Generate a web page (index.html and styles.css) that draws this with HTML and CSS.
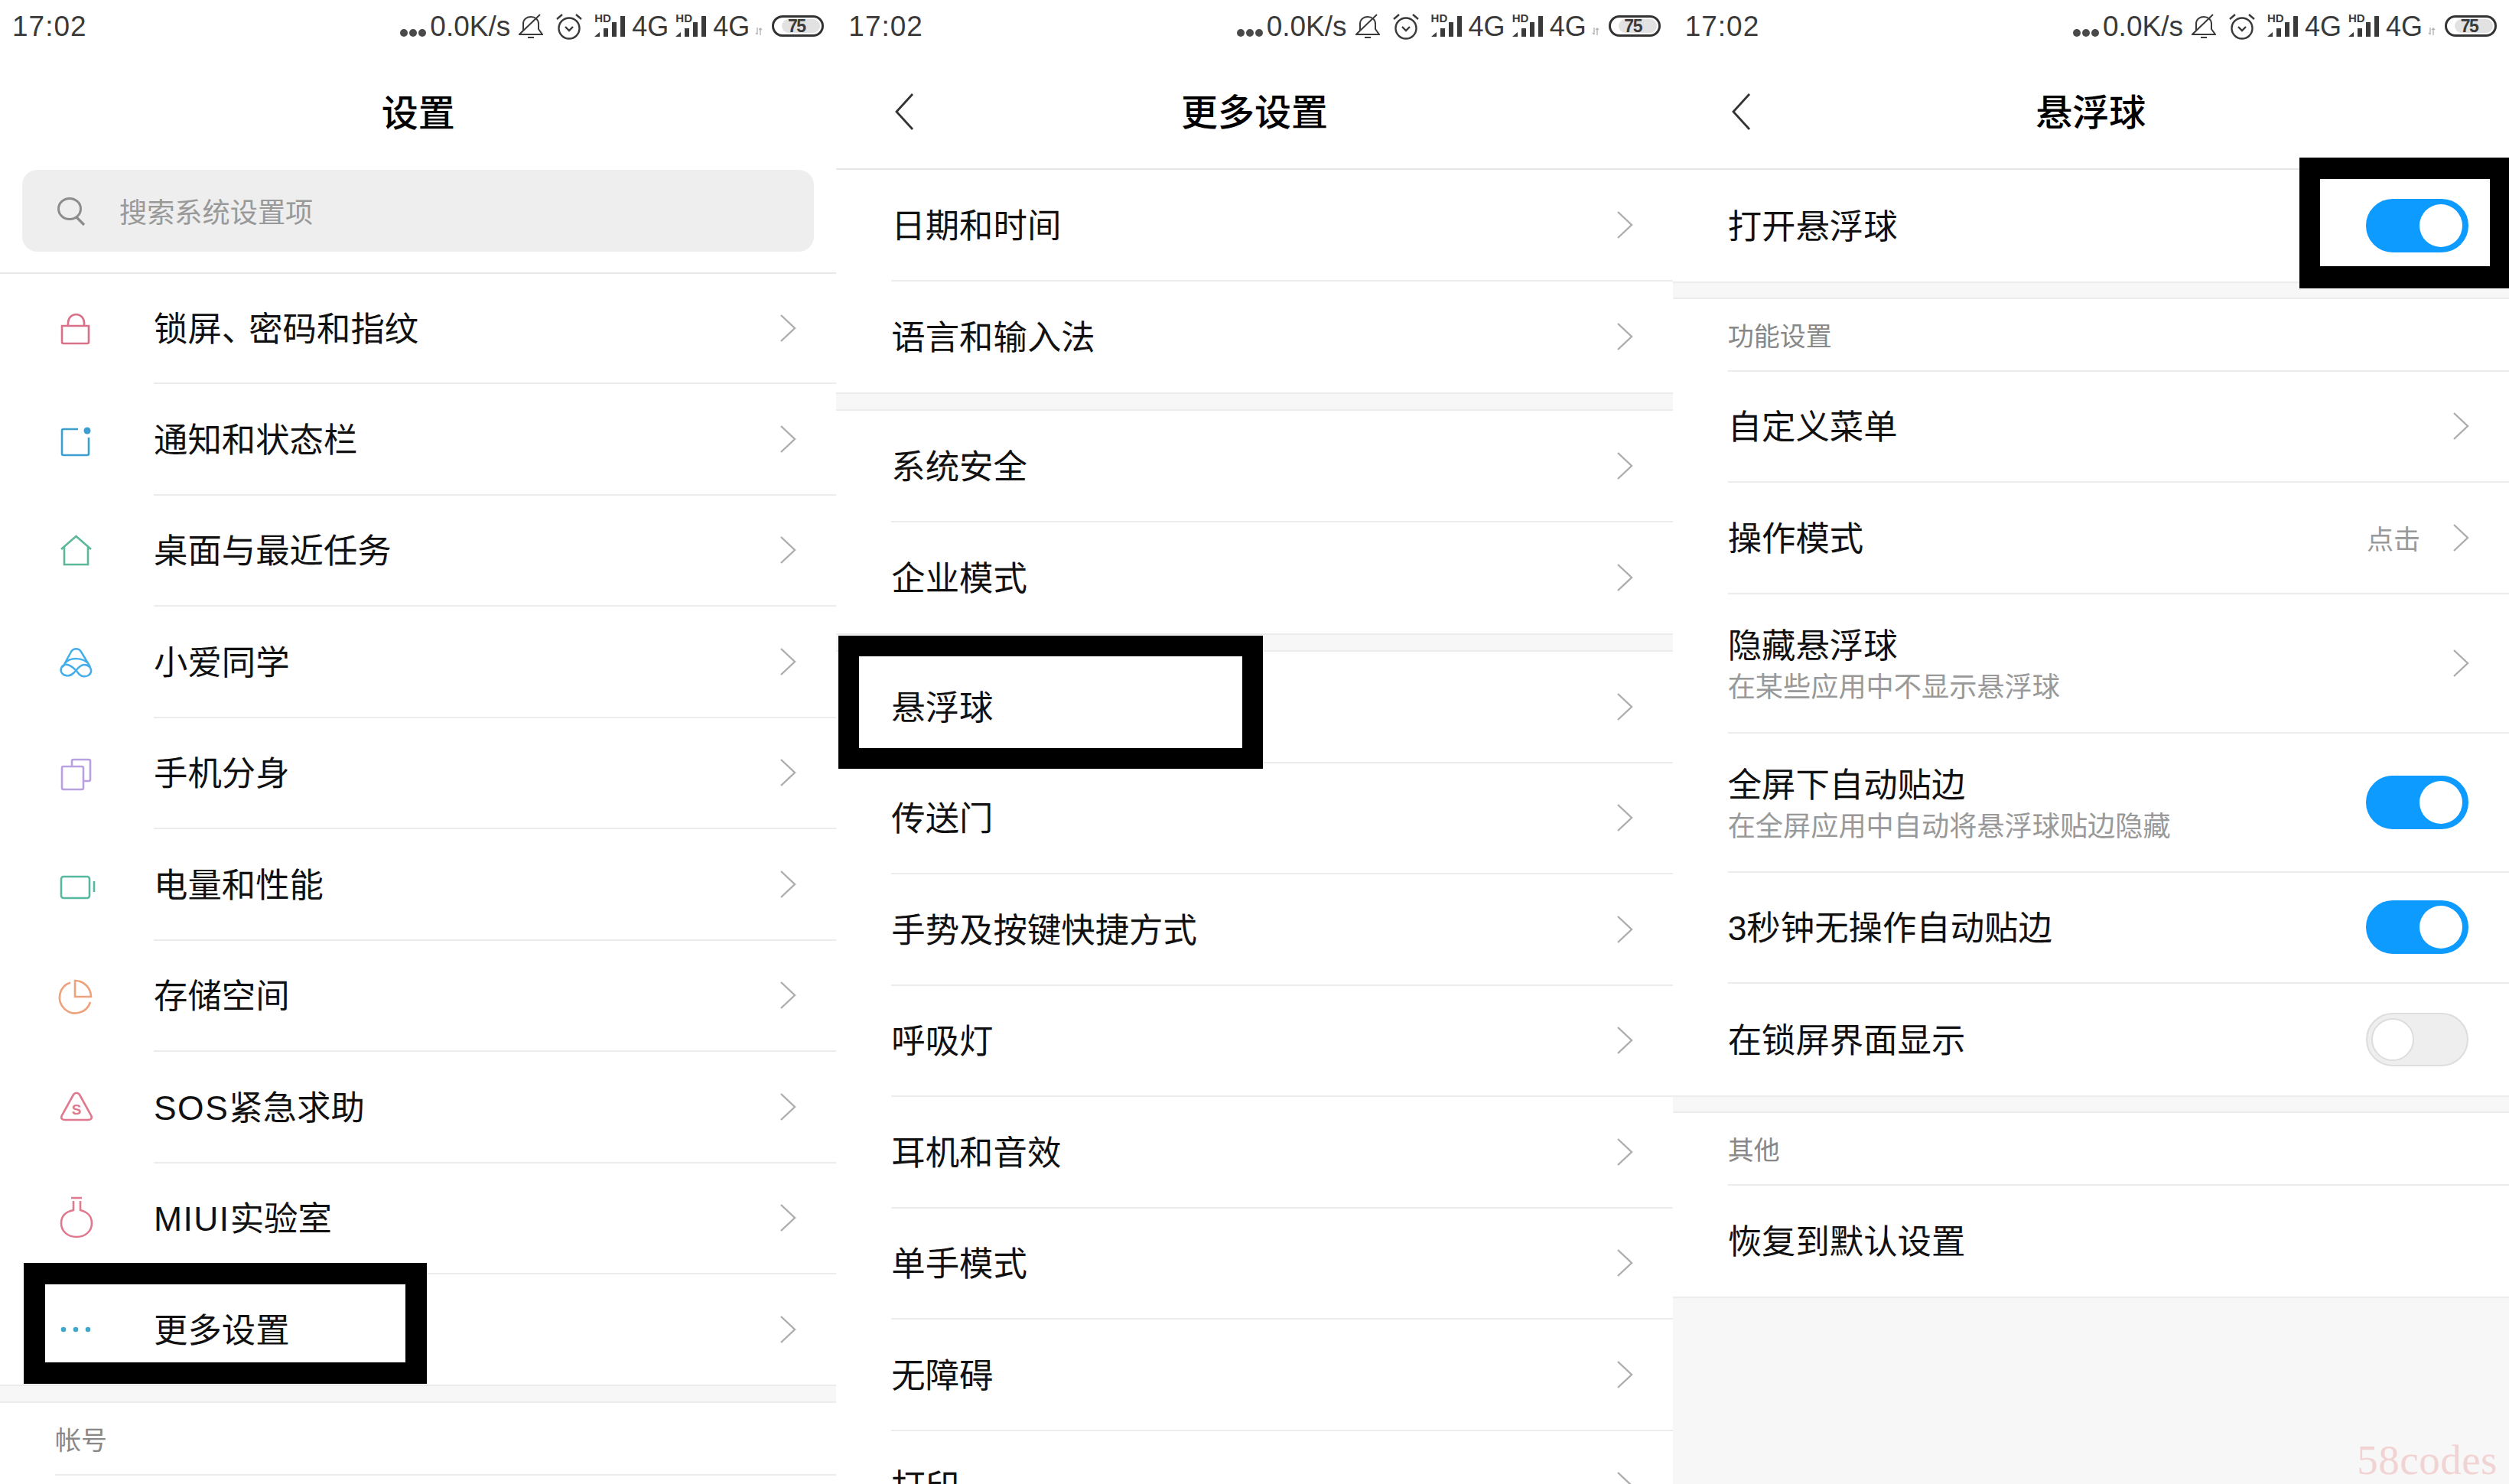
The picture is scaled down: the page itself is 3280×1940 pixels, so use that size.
FILE: index.html
```html
<!doctype html>
<html lang="zh-CN">
<head>
    <meta charset="UTF-8">
    <title>悬浮球设置</title>
    <link rel="stylesheet" href="styles.css">
</head>
<body>
<!-- shared icons -->
<svg class="defs" xmlns="http://www.w3.org/2000/svg">
    <symbol id="chev" viewBox="0 0 22 38"><path d="M2 2L20 19L2 36" fill="none" stroke="#adadad" stroke-width="2.4"/></symbol>
    <symbol id="back" viewBox="0 0 26 48"><path d="M24 1L3 24L24 47" fill="none" stroke="#333" stroke-width="2.8"/></symbol>
    <symbol id="dots3" viewBox="0 0 34 10"><circle cx="5" cy="5" r="5" fill="#4a4a4a"/><circle cx="17" cy="5" r="5" fill="#4a4a4a"/><circle cx="29" cy="5" r="5" fill="#4a4a4a"/></symbol>
    <symbol id="bell" viewBox="0 0 32 32"><path d="M6 22V13C6 7 11 4 16 4C22 4 26 8 26 13V20L31 27H1L6 22M2 26L28 1M12 31H20" fill="none" stroke="#3a3a3a" stroke-width="2"/></symbol>
    <symbol id="alarm" viewBox="0 0 36 36"><circle cx="18" cy="21" r="13.5" fill="none" stroke="#3a3a3a" stroke-width="2.4"/><path d="M2 9L9 3M27 3L34 9M13 19L18 24L23 19" fill="none" stroke="#3a3a3a" stroke-width="2.4"/></symbol>
    <symbol id="bars" viewBox="0 0 41 30"><path d="M0 29L7 23V29ZM12 18H18V29H12ZM23 10H29V29H23ZM34 2H40V29H34Z" fill="#3a3a3a"/></symbol>
    <symbol id="arrows" viewBox="0 0 10 10"><path d="M3 0V9M1 7L3 9M7 10V1M5 3L7 1L9 3" fill="none" stroke="#b5b5b5" stroke-width="1.4"/></symbol>
</svg>

<div class="phones">
    <!-- 设置 -->
    <section class="panel">
        <div class="status">
            <span class="st-time">17:02</span>
            <div class="st-right">
                <svg class="st-dots"><use href="#dots3"/></svg>
                <span class="st-speed">0.0K/s</span>
                <svg class="st-bell"><use href="#bell"/></svg>
                <svg class="st-alarm"><use href="#alarm"/></svg>
                <div class="st-sig"><svg class="st-bars"><use href="#bars"/></svg><span class="st-hd">HD</span></div>
                <span class="st-net">4G</span>
                <div class="st-sig"><svg class="st-bars"><use href="#bars"/></svg><span class="st-hd">HD</span></div>
                <span class="st-net">4G</span>
                <svg class="st-arrows"><use href="#arrows"/></svg>
                <div class="st-bat"><span class="st-fill">75</span></div>
            </div>
        </div>
        <header class="head"><h1 class="head-title">设置</h1></header>
        <div class="search-wrap">
            <div class="search">
                <svg class="search-icon" viewBox="0 0 38 38"><ellipse cx="17" cy="15" rx="14.5" ry="13.5" fill="none" stroke="#8c8c8c" stroke-width="3"/><path d="M26 26L36 36" stroke="#8c8c8c" stroke-width="3.4"/></svg>
                <span class="search-text">搜索系统设置项</span>
            </div>
        </div>
        <ul class="list list-main">
            <li class="row row-first">
                <svg class="row-icon" viewBox="0 0 54 54"><path d="M9 23H44V44A2 2 0 0 1 42 46H11A2 2 0 0 1 9 44ZM17 23V19A10.500 11 0 0 1 38 19V23" fill="none" stroke="#d9708a" stroke-width="2.6"/></svg>
                <div class="row-body"><span class="row-text">锁屏<span class="row-punct">、</span>密码和指纹</span><svg class="chev"><use href="#chev"/></svg></div>
            </li>
            <li class="row">
                <svg class="row-icon" viewBox="0 0 54 54"><path d="M30 13H11A2 2 0 0 0 9 15V45A2 2 0 0 0 11 47H42A2 2 0 0 0 44 45V24" fill="none" stroke="#3c9fd0" stroke-width="2.6"/><circle cx="42" cy="15" r="4.500" fill="#3c9fd0"/></svg>
                <div class="row-body"><span class="row-text">通知和状态栏</span><svg class="chev"><use href="#chev"/></svg></div>
            </li>
            <li class="row">
                <svg class="row-icon" viewBox="0 0 54 54"><path d="M8 25L27.500 8L47 25M12 22V45H43V22" fill="none" stroke="#5cb89a" stroke-width="2.6"/></svg>
                <div class="row-body"><span class="row-text">桌面与最近任务</span><svg class="chev"><use href="#chev"/></svg></div>
            </li>
            <li class="row">
                <svg class="row-icon" viewBox="0 0 54 54"><path d="M10 33L21 13C24 8 31 8 34 13L46 33M13 28C20 20 36 20 44 29M28 38C23 33 18 29 13 30C8 31 6 37 9 41C13 46 20 45 24 41C28 37 32 30 38 30C44 30 48 35 47 39C46 44 41 46 36 45C32 44 30 41 28 38Z" fill="none" stroke="#44aeea" stroke-width="2.5"/></svg>
                <div class="row-body"><span class="row-text">小爱同学</span><svg class="chev"><use href="#chev"/></svg></div>
            </li>
            <li class="row">
                <svg class="row-icon" viewBox="0 0 54 54"><rect x="9" y="18" width="28" height="30" rx="2" fill="none" stroke="#b9a0e0" stroke-width="2.6"/><path d="M22 17V11A2 2 0 0 1 24 9H44A2 2 0 0 1 46 11V35A2 2 0 0 1 44 37H38" fill="none" stroke="#b9a0e0" stroke-width="2.6"/></svg>
                <div class="row-body"><span class="row-text">手机分身</span><svg class="chev"><use href="#chev"/></svg></div>
            </li>
            <li class="row">
                <svg class="row-icon" viewBox="0 0 54 54"><rect x="8" y="16" width="37" height="28" rx="3" fill="none" stroke="#56b8a0" stroke-width="2.6"/><path d="M51 22V36" stroke="#56b8a0" stroke-width="2.6"/></svg>
                <div class="row-body"><span class="row-text">电量和性能</span><svg class="chev"><use href="#chev"/></svg></div>
            </li>
            <li class="row">
                <svg class="row-icon" viewBox="0 0 54 54"><path d="M20 9.500A20.500 20.500 0 1 0 46 35M26 7V28H47C47 16 37 7 26 7Z" fill="none" stroke="#eda27c" stroke-width="2.6"/></svg>
                <div class="row-body"><span class="row-text">存储空间</span><svg class="chev"><use href="#chev"/></svg></div>
            </li>
            <li class="row">
                <svg class="row-icon" viewBox="0 0 54 54"><path d="M24 10C26 7 30 7 32 10L47 37C49 41 47 43 43 43H13C9 43 7 41 9 37Z" fill="none" stroke="#e0788e" stroke-width="2.6"/><text x="28" y="36" class="sos-s">S</text></svg>
                <div class="row-body"><span class="row-text"><span class="row-latin">SOS</span>紧急求助</span><svg class="chev"><use href="#chev"/></svg></div>
            </li>
            <li class="row">
                <svg class="row-icon icon-over" viewBox="0 0 54 54"><path d="M21 0H35M24 4V16C14 18 8 24 8 33C8 44 17 51 28 51C39 51 48 44 48 33C48 24 42 18 33 16V4" fill="none" stroke="#e0788e" stroke-width="2.6"/></svg>
                <div class="row-body"><span class="row-text"><span class="row-latin">MIUI</span>实验室</span><svg class="chev"><use href="#chev"/></svg></div>
            </li>
            <li class="row row-end">
                <svg class="row-icon" viewBox="0 0 54 54"><circle cx="11" cy="27" r="3.300" fill="#3fa7c9"/><circle cx="27" cy="27" r="3.300" fill="#3fa7c9"/><circle cx="43" cy="27" r="3.300" fill="#3fa7c9"/></svg>
                <div class="row-body"><span class="row-text">更多设置</span><svg class="chev"><use href="#chev"/></svg></div>
            </li>
        </ul>
        <div class="band"></div>
        <div class="sec"><span class="sec-text">帐号</span></div>
        <div class="mark mark-more"></div>
    </section>

    <!-- 更多设置 -->
    <section class="panel">
        <div class="status">
            <span class="st-time">17:02</span>
            <div class="st-right">
                <svg class="st-dots"><use href="#dots3"/></svg>
                <span class="st-speed">0.0K/s</span>
                <svg class="st-bell"><use href="#bell"/></svg>
                <svg class="st-alarm"><use href="#alarm"/></svg>
                <div class="st-sig"><svg class="st-bars"><use href="#bars"/></svg><span class="st-hd">HD</span></div>
                <span class="st-net">4G</span>
                <div class="st-sig"><svg class="st-bars"><use href="#bars"/></svg><span class="st-hd">HD</span></div>
                <span class="st-net">4G</span>
                <svg class="st-arrows"><use href="#arrows"/></svg>
                <div class="st-bat"><span class="st-fill">75</span></div>
            </div>
        </div>
        <header class="head head-line">
            <svg class="back"><use href="#back"/></svg>
            <h1 class="head-title">更多设置</h1>
        </header>
        <ul class="list">
            <li class="row"><div class="row-body"><span class="row-text">日期和时间</span><svg class="chev"><use href="#chev"/></svg></div></li>
            <li class="row row-end"><div class="row-body"><span class="row-text">语言和输入法</span><svg class="chev"><use href="#chev"/></svg></div></li>
        </ul>
        <div class="band"></div>
        <ul class="list">
            <li class="row"><div class="row-body"><span class="row-text">系统安全</span><svg class="chev"><use href="#chev"/></svg></div></li>
            <li class="row row-end"><div class="row-body"><span class="row-text">企业模式</span><svg class="chev"><use href="#chev"/></svg></div></li>
        </ul>
        <div class="band"></div>
        <ul class="list">
            <li class="row"><div class="row-body"><span class="row-text">悬浮球</span><svg class="chev"><use href="#chev"/></svg></div></li>
            <li class="row"><div class="row-body"><span class="row-text">传送门</span><svg class="chev"><use href="#chev"/></svg></div></li>
            <li class="row"><div class="row-body"><span class="row-text">手势及按键快捷方式</span><svg class="chev"><use href="#chev"/></svg></div></li>
            <li class="row"><div class="row-body"><span class="row-text">呼吸灯</span><svg class="chev"><use href="#chev"/></svg></div></li>
            <li class="row"><div class="row-body"><span class="row-text">耳机和音效</span><svg class="chev"><use href="#chev"/></svg></div></li>
            <li class="row"><div class="row-body"><span class="row-text">单手模式</span><svg class="chev"><use href="#chev"/></svg></div></li>
            <li class="row"><div class="row-body"><span class="row-text">无障碍</span><svg class="chev"><use href="#chev"/></svg></div></li>
            <li class="row"><div class="row-body"><span class="row-text">打印</span><svg class="chev"><use href="#chev"/></svg></div></li>
        </ul>
        <div class="mark mark-ball"></div>
    </section>

    <!-- 悬浮球 -->
    <section class="panel">
        <div class="status">
            <span class="st-time">17:02</span>
            <div class="st-right">
                <svg class="st-dots"><use href="#dots3"/></svg>
                <span class="st-speed">0.0K/s</span>
                <svg class="st-bell"><use href="#bell"/></svg>
                <svg class="st-alarm"><use href="#alarm"/></svg>
                <div class="st-sig"><svg class="st-bars"><use href="#bars"/></svg><span class="st-hd">HD</span></div>
                <span class="st-net">4G</span>
                <div class="st-sig"><svg class="st-bars"><use href="#bars"/></svg><span class="st-hd">HD</span></div>
                <span class="st-net">4G</span>
                <svg class="st-arrows"><use href="#arrows"/></svg>
                <div class="st-bat"><span class="st-fill">75</span></div>
            </div>
        </div>
        <header class="head head-line">
            <svg class="back"><use href="#back"/></svg>
            <h1 class="head-title">悬浮球</h1>
        </header>
        <ul class="list">
            <li class="row row-end"><div class="row-body"><span class="row-text">打开悬浮球</span><span class="toggle on"></span></div></li>
        </ul>
        <div class="band band-thin"></div>
        <div class="sec"><span class="sec-text">功能设置</span></div>
        <ul class="list">
            <li class="row"><div class="row-body"><span class="row-text">自定义菜单</span><svg class="chev"><use href="#chev"/></svg></div></li>
            <li class="row"><div class="row-body"><span class="row-text">操作模式</span><span class="row-value">点击</span><svg class="chev"><use href="#chev"/></svg></div></li>
            <li class="row row-tall"><div class="row-body"><div class="row-stack"><span class="row-text">隐藏悬浮球</span><span class="row-sub">在某些应用中不显示悬浮球</span></div><svg class="chev"><use href="#chev"/></svg></div></li>
            <li class="row row-tall"><div class="row-body"><div class="row-stack"><span class="row-text">全屏下自动贴边</span><span class="row-sub">在全屏应用中自动将悬浮球贴边隐藏</span></div><span class="toggle on"></span></div></li>
            <li class="row"><div class="row-body"><span class="row-text">3秒钟无操作自动贴边</span><span class="toggle on"></span></div></li>
            <li class="row row-end"><div class="row-body"><span class="row-text">在锁屏界面显示</span><span class="toggle"></span></div></li>
        </ul>
        <div class="band band-thin"></div>
        <div class="sec"><span class="sec-text">其他</span></div>
        <ul class="list">
            <li class="row row-end"><div class="row-body"><span class="row-text">恢复到默认设置</span></div></li>
        </ul>
        <div class="rest"></div>
        <div class="mark mark-switch"></div>
        <span class="stamp">58codes</span>
    </section>
</div>
</body>
</html>
```

FILE: styles.css
```css
/*reset*/
body, h1, ul, li {
    margin: 0;
    padding: 0;
}
ul { list-style: none; }
.defs { display: none; }
/*/reset*/

body {
    width: 3280px;
    height: 1940px;
    overflow: hidden;
    background-color: #fff;
    color: #111;
    font-family: "Liberation Sans", "Noto Sans CJK SC", sans-serif;
}
.phones {
    display: grid;
    grid-template-columns: repeat(3, 1fr);
    height: 1940px;
}
.panel {
    position: relative;
    display: flex;
    flex-direction: column;
    height: 1940px;
    overflow: hidden;
}

/* status bar */
.status {
    flex: none;
    display: flex;
    justify-content: space-between;
    align-items: center;
    height: 68px;
    padding: 0 16px 2px;
    color: #3a3a3a;
}
.st-time {
    padding-top: 2px;
    font-size: 37px;
    letter-spacing: 1px;
}
.st-right {
    display: flex;
    align-items: center;
}
.st-dots {
    width: 34px;
    height: 10px;
    margin-top: 18px;
}
.st-speed {
    margin-left: 5px;
    padding-top: 2px;
    font-size: 37px;
}
.st-bell {
    width: 32px;
    height: 32px;
    margin-left: 11px;
}
.st-alarm {
    width: 36px;
    height: 36px;
    margin-left: 16px;
}
.st-sig {
    position: relative;
    width: 41px;
    height: 30px;
    margin-left: 15px;
}
.st-net + .st-sig { margin-left: 9px; }
.st-bars {
    display: block;
    width: 41px;
    height: 30px;
}
.st-hd {
    position: absolute;
    left: 0;
    top: -2px;
    font-size: 15px;
    line-height: 13px;
    font-weight: bold;
}
.st-net {
    margin-left: 8px;
    padding-top: 2px;
    font-size: 36px;
}
.st-arrows {
    width: 10px;
    height: 10px;
    margin: 14px 0 0 7px;
}
.st-bat {
    display: flex;
    box-sizing: border-box;
    width: 68px;
    height: 28px;
    margin-left: 12px;
    padding: 2px;
    border: 3px solid #333;
    border-radius: 14px;
}
.st-fill {
    flex: 1;
    margin-left: 8px;
    padding-right: 12px;
    border-radius: 10px;
    background-color: #e2e2e2;
    font-size: 23px;
    line-height: 18px;
    font-weight: bold;
    letter-spacing: -1.5px;
    text-align: center;
}

/* title bar */
.head {
    flex: none;
    display: grid;
    grid-template-columns: 1fr auto 1fr;
    align-items: center;
    box-sizing: border-box;
    height: 152px;
    padding: 6px 0 0 76px;
}
.head-line {
    border-bottom: 2px solid #e6e6e6;
}
.head-title {
    grid-column: 2;
    grid-row: 1;
    margin-left: -76px;
    color: #000;
    font-size: 48px;
    font-weight: 500;
    line-height: 60px;
}
.back {
    grid-column: 1;
    grid-row: 1;
    width: 26px;
    height: 48px;
    margin-top: -4px;
}

/* search */
.search-wrap {
    flex: none;
    box-sizing: border-box;
    height: 136px;
    padding: 0 29px 27px;
    border-bottom: 2px solid #e9e9e9;
}
.search {
    display: flex;
    align-items: center;
    height: 107px;
    padding-left: 45px;
    border-radius: 20px;
    background-color: #eee;
}
.search-icon {
    flex: none;
    width: 38px;
    height: 38px;
    margin-top: 3px;
}
.search-text {
    margin-bottom: 2px;
    margin-left: 44px;
    color: #999;
    font-size: 36.2px;
}

/* rows */
.list { flex: none; }
.row {
    display: flex;
    height: 145.5px;
    padding-left: 72px;
}
.row-tall { height: 182px; }
.row-first { height: 144px; }
.list-main .row-end { height: 143.5px; }
.row-icon {
    flex: none;
    align-self: center;
    width: 54px;
    height: 54px;
    margin-right: 75px;
}
.icon-over { overflow: visible; }
.sos-s {
    fill: #e0788e;
    font-size: 19px;
    font-weight: bold;
    text-anchor: middle;
}
.row-body {
    flex: 1;
    display: flex;
    align-items: center;
    box-sizing: border-box;
    padding-right: 52px;
    border-bottom: 2px solid #ececec;
}
.row-end .row-body { border-bottom: none; }
.row-text {
    flex: none;
    padding-top: 4px;
    font-size: 44.4px;
    line-height: 54px;
}
.row-punct { letter-spacing: -9px; }
.row-latin { letter-spacing: 1.5px; }
.row-stack {
    flex: 1;
    display: flex;
    flex-direction: column;
    padding-top: 6px;
}
.row-sub {
    color: #999;
    font-size: 36.2px;
    line-height: 54px;
}
.row-value {
    margin-right: 42px;
    margin-left: auto;
    color: #999;
    font-size: 35px;
}
.chev {
    flex: none;
    width: 22px;
    height: 38px;
    margin-left: auto;
}
.row-value + .chev { margin-left: 0; }

/* section gaps */
.band {
    flex: none;
    box-sizing: border-box;
    height: 24px;
    border-top: 2px solid #ececec;
    border-bottom: 2px solid #ececec;
    background-color: #f7f7f7;
}
.band-thin { height: 23px; }
.sec {
    flex: none;
    display: flex;
    align-items: center;
    box-sizing: border-box;
    height: 95px;
    margin-left: 72px;
    border-bottom: 2px solid #ececec;
}
.sec-text {
    color: #888;
    font-size: 34px;
}
.rest {
    flex: 1;
    border-top: 2px solid #ececec;
    background-color: #f7f7f7;
}

/* switches */
.toggle {
    position: relative;
    flex: none;
    box-sizing: border-box;
    width: 134px;
    height: 70px;
    margin-left: auto;
    margin-right: 1px;
    border: 2px solid #ddd;
    border-radius: 35px;
    background-color: #eee;
}
.toggle:after {
    content: "";
    position: absolute;
    left: 5px;
    top: 5px;
    box-sizing: border-box;
    width: 56px;
    height: 56px;
    border: 2px solid #ddd;
    border-radius: 50%;
    background-color: #fff;
}
.toggle.on {
    border-color: #0d9bff;
    background-color: #0d9bff;
}
.toggle.on:after {
    left: 68px;
    border: none;
}

/* black marks drawn on the screenshot */
.mark {
    position: absolute;
    box-sizing: border-box;
    border: 28px solid #000;
}
.mark-more {
    left: 31px;
    top: 1651px;
    width: 527px;
    height: 158px;
}
.mark-ball {
    left: 3px;
    top: 831px;
    width: 555px;
    height: 174px;
    border-width: 27px;
}
.mark-switch {
    left: 819px;
    top: 206px;
    right: 0;
    height: 171px;
    border-width: 28px 25px 29px 27px;
}
.stamp {
    position: absolute;
    right: 15px;
    bottom: 1px;
    color: #f2d3d3;
    font-family: "Liberation Serif", serif;
    font-size: 55px;
    line-height: 60px;
    letter-spacing: .5px;
}
```
